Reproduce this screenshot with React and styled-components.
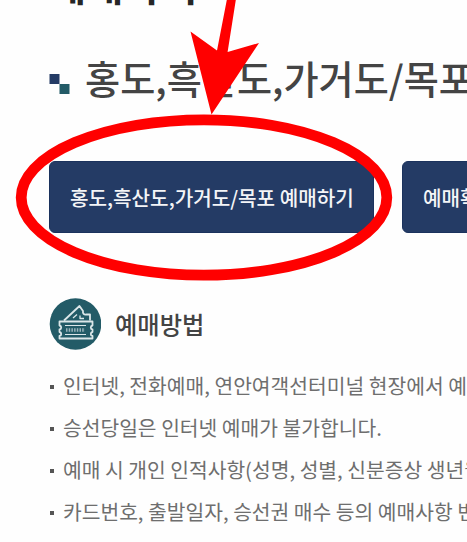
import React from 'react';
import styled, { createGlobalStyle } from 'styled-components';

const GlobalStyle = createGlobalStyle`
  * { box-sizing: border-box; }
  body { margin: 0; background: #fff; }
`;

const Page = styled.main`
  position: relative;
  width: 467px;
  height: 542px;
  overflow: hidden;
  background: #fefefe;
  font-family: "Noto Sans CJK KR", sans-serif;
  white-space: nowrap;
`;

const Content = styled.div`
  display: flex;
  flex-direction: column;
  padding-left: 49px;
`;

const PageTitle = styled.h1`
  margin: -46px 0 0;
  height: 60px;
  line-height: 60px;
  font-size: 40.4px;
  font-weight: 700;
  color: #262626;
`;

const RouteHeading = styled.h2`
  display: flex;
  align-items: center;
  gap: 15px;
  margin: 34px 0 0;
  height: 60px;
  font-size: 38.2px;
  line-height: 60px;
  font-weight: 500;
  color: #444;
`;

const HeadingMark = styled.svg`
  flex: none;
  width: 21px;
  height: 21px;
  margin-top: 12px;
`;

const ButtonRow = styled.div`
  display: flex;
  gap: 28px;
  margin-top: 53px;
`;

const ReserveButton = styled.button`
  flex: none;
  width: ${(p) => p.$width}px;
  height: 72px;
  padding: 0 0 0 20px;
  border: 1px solid #1b325d;
  border-radius: 6px;
  background: #243b65;
  color: #f4f5f7;
  font: 500 20.15px/72px "Noto Sans CJK KR", sans-serif;
  text-align: left;
`;

const MethodHeading = styled.h3`
  display: flex;
  align-items: center;
  gap: 14px;
  margin: 65px 0 0;
  height: 52px;
  font-size: 24.3px;
  line-height: 52px;
  font-weight: 500;
  color: #444;
`;

const TicketIcon = styled.svg`
  flex: none;
  width: 52px;
  height: 52px;
`;

const MethodList = styled.ul`
  display: grid;
  grid-auto-rows: 42px;
  margin: 14px 0 0;
  padding: 0;
  list-style: none;
`;

const MethodItem = styled.li`
  display: flex;
  align-items: center;
  gap: 9px;
  font-size: 20.35px;
  line-height: 42px;
  color: #6e6e6e;

  &::before {
    content: "";
    flex: none;
    width: 4px;
    height: 4px;
    margin: 4px 0 0 1px;
    background: #555;
  }
`;

const Annotation = styled.svg`
  position: absolute;
  inset: 0;
  width: 467px;
  height: 542px;
  pointer-events: none;
`;

const methods = [
  '인터넷, 전화예매, 연안여객선터미널 현장에서 예매',
  '승선당일은 인터넷 예매가 불가합니다.',
  '예매 시 개인 인적사항(성명, 성별, 신분증상 생년월일',
  '카드번호, 출발일자, 승선권 매수 등의 예매사항 변경',
];

export default function App() {
  return (
    <Page>
      <GlobalStyle />
      <Content>
        <PageTitle>예매하기</PageTitle>
        <RouteHeading>
          <HeadingMark viewBox="0 0 21 21" aria-hidden="true">
            <rect x="0.5" y="0" width="10" height="10" fill="#243b65" />
            <rect x="10.5" y="10" width="10" height="10" fill="#235b67" />
          </HeadingMark>
          홍도,흑산도,가거도/목포
        </RouteHeading>
        <ButtonRow>
          <ReserveButton $width={325}>홍도,흑산도,가거도/목포 예매하기</ReserveButton>
          <ReserveButton $width={180}>예매확인</ReserveButton>
        </ButtonRow>
        <MethodHeading>
          <TicketIcon viewBox="0 0 52 52" aria-hidden="true">
            <circle cx="26.5" cy="26" r="25.8" fill="#235b67" />
            <g fill="none" stroke="#dce7e9" strokeWidth="1.8" strokeLinejoin="round">
              <path d="M10.500 23.500h33v4c-2.300.5-2.300 3.500 0 4v2.500c-2.300.5-2.300 3.500 0 4v2.500h-33v-2.500c2.300-.5 2.300-3.500 0-4v-2.500c2.300-.5 2.300-3.500 0-4z" />
              <path d="M15 22.500l15.500-14.500 3.500 5c-.5 2.500 1 4 3.500 3.500l3.500 0v6" />
              <path d="M24 20l4-3.500M31 17.500v3h4" strokeWidth="1.300" />
              <path d="M16 27.500h21M16 36.500h21" strokeWidth="1" />
              <path d="M17 32h19" strokeWidth="3.500" strokeDasharray="1.500 1.200" opacity=".65" />
            </g>
          </TicketIcon>
          예매방법
        </MethodHeading>
        <MethodList>
          {methods.map((text) => (
            <MethodItem key={text}>{text}</MethodItem>
          ))}
        </MethodList>
      </Content>
      <Annotation viewBox="0 0 467 542" aria-hidden="true">
        <ellipse cx="204" cy="197.500" rx="182.800" ry="77.700" fill="none" stroke="#f00" strokeWidth="10.800" />
        <path d="M226.800 0H235.800L227.600 52 259 43 211.500 114.500 190.500 31.500 217 50.500Z" fill="#f00" />
      </Annotation>
    </Page>
  );
}
